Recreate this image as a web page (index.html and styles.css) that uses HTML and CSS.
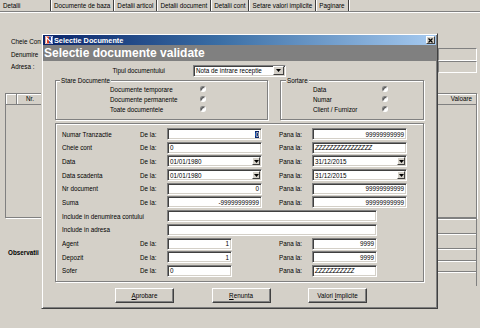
FILE: index.html
```html
<!DOCTYPE html>
<html>
<head>
<meta charset="utf-8">
<title>Selectie Documente</title>
<link rel="stylesheet" href="styles.css">
</head>
<body>
<div class="screen">
  <div class="tabs">
    <span class="tab tab-first">Detalii</span>
    <span class="tab">Documente de baza</span>
    <span class="tab">Detalii articol</span>
    <span class="tab">Detalii document</span>
    <span class="tab">Detalii cont</span>
    <span class="tab">Setare valori implicite</span>
    <span class="tab">Paginare</span>
  </div>

  <div class="head">
    <div class="head-labels">
      <div>Cheie Cont</div>
      <div>Denumire</div>
      <div>Adresa :</div>
    </div>
    <div class="head-fields">
      <div class="hfield"></div>
      <div class="hfield"></div>
    </div>
  </div>

  <div class="grid">
    <div class="grid-header">
      <div class="gh gh-corner"></div>
      <div class="gh gh-nr">Nr.</div>
      <div class="gh gh-fill"></div>
      <div class="gh gh-val">Valoare</div>
    </div>
  </div>

  <div class="foot">
    <div class="obs">Observatii</div>
    <div class="foot-fields">
      <div class="ff ff1"></div>
      <div class="ff ff2"></div>
      <div class="ff ff3"></div>
      <div class="ff ff4"></div>
      <div class="ff ff5"></div>
    </div>
  </div>

  <div class="dialog">
    <div class="titlebar">
      <svg class="app-icon" width="8" height="8" viewBox="0 0 8 8">
        <rect x="0" y="0" width="8" height="8" fill="#ffffff"/>
        <rect x="0.5" y="0.5" width="3.5" height="7" fill="#d83a1c"/>
        <rect x="4" y="0.5" width="3.5" height="7" fill="#1c3fa8"/>
        <path d="M1.5 7 L1.5 1.5 L6.5 6.5 L6.5 1" stroke="#ffffff" stroke-width="1.1" fill="none"/>
      </svg>
      <span class="title">Selectie Documente</span>
      <span class="close">
        <svg width="5" height="5" viewBox="0 0 5 5"><path d="M0.5 0.5 L4.5 4.5 M4.5 0.5 L0.5 4.5" stroke="#000" stroke-width="1.2"/></svg>
      </span>
    </div>

    <div class="banner">Selectie documente validate</div>

    <div class="type-row">
      <span class="type-label">Tipul documentului</span>
      <div class="field combo combo-type">
        <span class="combo-text">Nota de intrare receptie</span>
        <span class="combo-btn combo-btn-wide"><svg width="5" height="3" viewBox="0 0 5 3"><path d="M0 0 H5 L2.5 3 Z" fill="#000"/></svg></span>
      </div>
    </div>

    <div class="groups">
      <div class="group group-stare">
        <div class="legend">Stare Documente</div>
        <div class="radio-list">
          <span>Documente temporare</span><span class="radio"></span>
          <span>Documente permanente</span><span class="radio"></span>
          <span>Toate documentele</span><span class="radio"></span>
        </div>
      </div>
      <div class="group group-sort">
        <div class="legend">Sortare</div>
        <div class="radio-list">
          <span>Data</span><span class="radio"></span>
          <span>Numar</span><span class="radio"></span>
          <span>Client / Furnizor</span><span class="radio"></span>
        </div>
      </div>
    </div>

    <div class="group filters">
      <span class="lbl">Numar Tranzactie</span><span class="lbl">De la:</span>
      <div class="field right"><span class="sel">0</span></div>
      <span class="lbl col5">Pana la:</span>
      <div class="field right">99999999999</div>

      <span class="lbl">Cheie cont</span><span class="lbl">De la:</span>
      <div class="field">0</div>
      <span class="lbl col5">Pana la:</span>
      <div class="field"><span class="zz">ZZZZZZZZZZZZZZZZ</span></div>

      <span class="lbl">Data</span><span class="lbl">De la:</span>
      <div class="field combo"><span class="combo-text">01/01/1980</span><span class="combo-btn"><svg width="5" height="3" viewBox="0 0 5 3"><path d="M0 0 H5 L2.5 3 Z" fill="#000"/></svg></span></div>
      <span class="lbl col5">Pana la:</span>
      <div class="field combo"><span class="combo-text">31/12/2015</span><span class="combo-btn"><svg width="5" height="3" viewBox="0 0 5 3"><path d="M0 0 H5 L2.5 3 Z" fill="#000"/></svg></span></div>

      <span class="lbl">Data scadenta</span><span class="lbl">De la:</span>
      <div class="field combo"><span class="combo-text">01/01/1980</span><span class="combo-btn"><svg width="5" height="3" viewBox="0 0 5 3"><path d="M0 0 H5 L2.5 3 Z" fill="#000"/></svg></span></div>
      <span class="lbl col5">Pana la:</span>
      <div class="field combo"><span class="combo-text">31/12/2015</span><span class="combo-btn"><svg width="5" height="3" viewBox="0 0 5 3"><path d="M0 0 H5 L2.5 3 Z" fill="#000"/></svg></span></div>

      <span class="lbl">Nr document</span><span class="lbl">De la:</span>
      <div class="field right">0</div>
      <span class="lbl col5">Pana la:</span>
      <div class="field right">99999999999</div>

      <span class="lbl">Suma</span><span class="lbl">De la:</span>
      <div class="field right">-99999999999</div>
      <span class="lbl col5">Pana la:</span>
      <div class="field right">99999999999</div>

      <span class="lbl span2">Include in denumirea contului</span>
      <div class="field wide"></div>

      <span class="lbl span2">Include in adresa</span>
      <div class="field wide"></div>

      <span class="lbl">Agent</span><span class="lbl">De la:</span>
      <div class="field right short">1</div>
      <span class="lbl col5">Pana la:</span>
      <div class="field right short">9999</div>

      <span class="lbl">Depozit</span><span class="lbl">De la:</span>
      <div class="field right short">1</div>
      <span class="lbl col5">Pana la:</span>
      <div class="field right short">9999</div>

      <span class="lbl">Sofer</span><span class="lbl">De la:</span>
      <div class="field short">0</div>
      <span class="lbl col5">Pana la:</span>
      <div class="field short"><span class="zz">ZZZZZZZZZZZ</span></div>
    </div>

    <div class="buttons">
      <div class="btn"><span><u>A</u>probare</span></div>
      <div class="btn"><span><u>R</u>enunta</span></div>
      <div class="btn"><span>Valori <u>I</u>mplicite</span></div>
    </div>
  </div>
</div>
</body>
</html>
```

FILE: styles.css
```css
* { box-sizing: border-box; }
html, body { margin: 0; padding: 0; }
body {
  background: #d4d0c8;
  font-family: "Liberation Sans", Arial, sans-serif;
  font-size: 6.3px;
  color: #000;
  width: 480px;
  height: 328px;
  overflow: hidden;
}
.screen { position: relative; width: 480px; height: 328px; }

/* tab strip */
.tabs {
  display: flex;
  height: 12px;
  border-bottom: 1px solid #808080;
  box-shadow: 0 1px 0 #ffffff;
}
.tab {
  padding: 0 3px;
  line-height: 11px;
  white-space: nowrap;
  border-right: 1px solid #404040;
  box-shadow: 1px 0 0 #ffffff;
}
.tab-first { width: 51px; }

/* background form */
.head {
  display: flex;
  justify-content: space-between;
  padding: 24px 3px 0 11px;
}
.head-labels div { line-height: 12.5px; white-space: nowrap; }
.head-fields { width: 39px; margin-top: 12px; }
.hfield {
  height: 12.5px;
  border: 1px solid;
  border-color: #808080 #ffffff #ffffff #808080;
}

.grid {
  margin: 19.5px 3px 0 5px;
  height: 125px;
  border: 1px solid #808080;
  box-shadow: 1px 1px 0 #ffffff;
}
.grid-header { display: flex; height: 11px; }
.gh {
  border-right: 1px solid #808080;
  border-bottom: 1px solid #808080;
  box-shadow: inset 1px 1px 0 #ffffff;
  line-height: 10px;
  white-space: nowrap;
}
.gh-corner { width: 11px; }
.gh-nr { width: 26px; padding-left: 9px; }
.gh-fill { flex: 1; }
.gh-val { width: 39px; text-align: right; padding-right: 4px; border-right: 0; }

.foot {
  display: flex;
  justify-content: space-between;
  padding: 0 3px 0 8px;
}
.obs { margin-top: 31px; font-weight: bold; }
.foot-fields { width: 39px; }
.ff {
  border-top: 1px solid #808080;
  border-right: 1px solid #808080;
  box-shadow: inset 0 1px 0 #ffffff;
}
.ff1 { height: 15px; }
.ff2 { height: 15px; }
.ff3 { height: 12px; }
.ff4 { height: 11px; }
.ff5 { height: 15px; }

/* dialog */
.dialog {
  position: absolute;
  left: 41px;
  top: 33px;
  width: 397px;
  height: 276px;
  background: #d4d0c8;
  border: 1px solid;
  border-color: #d4d0c8 #404040 #404040 #d4d0c8;
  box-shadow: inset 1px 1px 0 #ffffff, inset -1px -1px 0 #808080;
  padding: 1px;
  display: flex;
  flex-direction: column;
}
.titlebar {
  height: 10px;
  display: flex;
  align-items: center;
  padding: 0 1px 0 2px;
  background: linear-gradient(to right, #0a246a, #3a6ea5 45%, #a6caf0);
}
.app-icon { display: block; flex: none; }
.title {
  margin-left: 1px;
  color: #ffffff;
  font-weight: bold;
  font-size: 7.3px;
  white-space: nowrap;
}
.close {
  margin-left: auto;
  width: 9px;
  height: 8px;
  background: #d4d0c8;
  border: 1px solid;
  border-color: #ffffff #404040 #404040 #ffffff;
  display: flex;
  align-items: center;
  justify-content: center;
}
.close svg { display: block; }
.banner {
  height: 16px;
  background: #808080;
  color: #ffffff;
  font-weight: bold;
  font-size: 12px;
  line-height: 16px;
  padding-left: 1px;
  white-space: nowrap;
}

.type-row {
  margin-top: 3px;
  height: 13px;
  display: flex;
  align-items: center;
}
.type-label { width: 122px; text-align: right; white-space: nowrap; }
.combo-type { margin-left: 28px; width: 93px; height: 13px; }

/* fields */
.field {
  height: 12px;
  background: #ffffff;
  border: 1px solid;
  border-color: #808080 #ffffff #ffffff #808080;
  box-shadow: inset 1px 1px 0 #404040, inset -1px -1px 0 #d4d0c8;
  padding: 0 2px;
  display: flex;
  align-items: center;
  white-space: nowrap;
  overflow: hidden;
}
.field.right { justify-content: flex-end; }
.field.short { width: 65px; }
.field.wide { grid-column: 3 / 7; width: 210px; }
.sel { background: #0a246a; color: #ffffff; }
.zz { font-style: italic; letter-spacing: -0.3px; }
.combo { padding-right: 1px; }
.combo-text { flex: 1; }
.combo-btn {
  width: 8px;
  height: 8px;
  background: #d4d0c8;
  border: 1px solid;
  border-color: #ffffff #404040 #404040 #ffffff;
  display: flex;
  align-items: center;
  justify-content: center;
}
.combo-btn svg { display: block; }
.combo-btn-wide { width: 11px; height: 9px; }

/* groups */
.groups {
  margin-top: 3px;
  display: flex;
  gap: 12px;
  padding: 0 12px;
}
.group {
  border: 1px solid #808080;
  box-shadow: inset 1px 1px 0 #ffffff, 1px 1px 0 #ffffff;
}
.group-stare { width: 213px; height: 40px; }
.group-sort { width: 144px; height: 40px; }
.legend {
  width: max-content;
  height: 7px;
  line-height: 7px;
  margin: -4px 0 0 4px;
  padding: 0 1px;
  background: #d4d0c8;
  white-space: nowrap;
}
.group-sort .legend { margin-left: 5px; }
.radio-list {
  display: grid;
  grid-template-columns: 90px 6px;
  grid-auto-rows: 10px;
  align-items: center;
  padding-left: 54px;
}
.group-sort .radio-list {
  grid-template-columns: 69px 6px;
  padding-left: 32px;
}
.radio-list span { white-space: nowrap; }
.radio {
  width: 6px;
  height: 6px;
  border-radius: 50%;
  background: #ffffff;
  border: 1px solid;
  border-color: #808080 #ffffff #ffffff #808080;
  box-shadow: inset 1px 1px 0 #404040;
}

.filters {
  margin: 3px 12px 0;
  height: 159px;
  padding: 4px 0 0 6px;
  display: grid;
  grid-template-columns: 78px 27px 95px 17px 33px 95px;
  grid-auto-rows: 12px;
  row-gap: 1.7px;
  align-items: center;
}
.lbl { white-space: nowrap; }
.lbl.col5 { grid-column: 5; }
.lbl.span2 { grid-column: 1 / 3; }

/* buttons */
.buttons {
  margin-top: 6px;
  display: flex;
  gap: 37.5px;
  padding-left: 72px;
}
.btn {
  width: 59px;
  height: 15px;
  border: 1px solid;
  border-color: #ffffff #404040 #404040 #ffffff;
  box-shadow: inset -1px -1px 0 #808080;
  display: flex;
  align-items: center;
  justify-content: center;
  white-space: nowrap;
}
```
